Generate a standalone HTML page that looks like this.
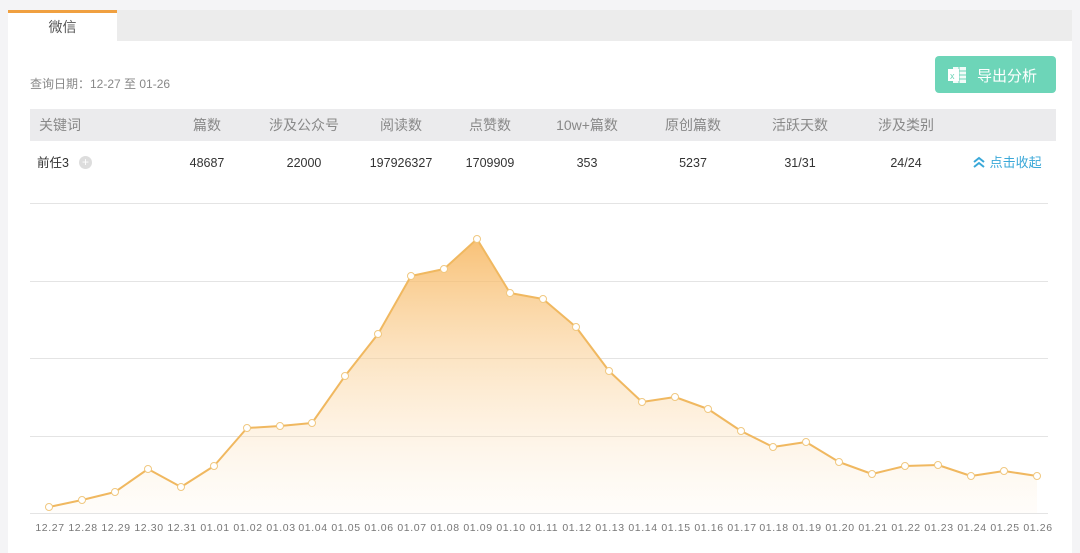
<!DOCTYPE html>
<html><head><meta charset="utf-8"><style>
body{margin:0;width:1080px;height:553px;background:#f4f4f6;font-family:"Liberation Sans","Noto Sans CJK SC",sans-serif;overflow:hidden;position:relative}
.panel{position:absolute;left:8px;top:10px;width:1064px;height:543px;background:#fff}
.tabbar{position:absolute;left:8px;top:10px;width:1064px;height:31px;background:#ececec}
.tab{position:absolute;left:8px;top:10px;width:109px;height:31px;background:#fff;border-top:3px solid #f0a040;box-sizing:border-box;text-align:center;font-size:14px;color:#555;line-height:28px}
.date{position:absolute;left:30px;top:76px;font-size:12px;color:#888;line-height:16px}
.btn{position:absolute;left:935px;top:56px;width:121px;height:37px;background:#6dd5b8;border-radius:4px;color:#fff;font-size:15px}
.btn span{position:absolute;left:42px;top:9px}
.thead{position:absolute;left:30px;top:109px;width:1026px;height:32px;background:#ebebed}
.c{position:absolute;font-size:14px;color:#888;transform:translateX(-50%);white-space:nowrap;line-height:18px}
.r{position:absolute;font-size:12.5px;color:#333;transform:translateX(-50%);white-space:nowrap;line-height:16px}
</style></head><body>
<div class="panel"></div>
<div class="tabbar"></div>
<div class="tab">微信</div>
<div class="date">查询日期：12-27 至 01-26</div>
<div class="btn"><svg style="position:absolute;left:12px;top:9px" width="20" height="20"><rect x="6" y="2" width="13" height="16" fill="#fff" opacity=".9"/><g stroke="#6dd5b8" stroke-width="1"><line x1="12" y1="2" x2="12" y2="18"/><line x1="6" y1="6" x2="19" y2="6"/><line x1="6" y1="10" x2="19" y2="10"/><line x1="6" y1="14" x2="19" y2="14"/></g><rect x="1" y="4" width="11" height="12" fill="#fff"/><text x="3" y="14" font-size="9" fill="#6dd5b8" font-family="Liberation Sans">x</text></svg><span>导出分析</span></div>
<div class="thead"></div>
<div class="c" style="left:60px;top:116px">关键词</div>
<div class="c" style="left:207px;top:116px">篇数</div>
<div class="c" style="left:304px;top:116px">涉及公众号</div>
<div class="c" style="left:401px;top:116px">阅读数</div>
<div class="c" style="left:490px;top:116px">点赞数</div>
<div class="c" style="left:587px;top:116px">10w+篇数</div>
<div class="c" style="left:693px;top:116px">原创篇数</div>
<div class="c" style="left:800px;top:116px">活跃天数</div>
<div class="c" style="left:906px;top:116px">涉及类别</div>
<div class="r" style="left:53px;top:155px">前任3</div>
<div style="position:absolute;left:79px;top:156px;width:13px;height:13px;border-radius:50%;background:#ddd;color:#fff;font-size:12px;line-height:13px;text-align:center">+</div>
<div class="r" style="left:207px;top:155px">48687</div>
<div class="r" style="left:304px;top:155px">22000</div>
<div class="r" style="left:401px;top:155px">197926327</div>
<div class="r" style="left:490px;top:155px">1709909</div>
<div class="r" style="left:587px;top:155px">353</div>
<div class="r" style="left:693px;top:155px">5237</div>
<div class="r" style="left:800px;top:155px">31/31</div>
<div class="r" style="left:906px;top:155px">24/24</div>
<div style="position:absolute;left:972px;top:154px;font-size:13px;color:#3aa8d8;line-height:18px"><svg width="14" height="14" style="vertical-align:-2px"><path d="M2 7l5-4 5 4M2 12l5-4 5 4" stroke="#3aa8d8" stroke-width="2" fill="none"/></svg> 点击收起</div>
<svg style="position:absolute;left:0;top:0" width="1080" height="553">
<defs><linearGradient id="g" x1="0" y1="0" x2="0" y2="1"><stop offset="0" stop-color="#f7b65e" stop-opacity=".85"/><stop offset="1" stop-color="#fde9cc" stop-opacity=".1"/></linearGradient></defs>
<g stroke="#e4e4e4" stroke-width="1"><line x1="30" y1="203.5" x2="1048" y2="203.5"/><line x1="30" y1="281.5" x2="1048" y2="281.5"/><line x1="30" y1="358.5" x2="1048" y2="358.5"/><line x1="30" y1="436.5" x2="1048" y2="436.5"/><line x1="30" y1="513.5" x2="1048" y2="513.5"/></g>
<polygon fill="url(#g)" points="49,513 49,507 82,500 115,492 148,469 181,487 214,466 247,428 280,426 312,423 345,376 378,334 411,276 444,269 477,239 510,293 543,299 576,327 609,371 642,402 675,397 708,409 741,431 773,447 806,442 839,462 872,474 905,466 938,465 971,476 1004,471 1037,476 1037,513"/>
<polyline fill="none" stroke="#f0b860" stroke-width="2" stroke-linejoin="round" points="49,507 82,500 115,492 148,469 181,487 214,466 247,428 280,426 312,423 345,376 378,334 411,276 444,269 477,239 510,293 543,299 576,327 609,371 642,402 675,397 708,409 741,431 773,447 806,442 839,462 872,474 905,466 938,465 971,476 1004,471 1037,476"/>
<g fill="#fff" stroke="#f0c880" stroke-width="1"><circle cx="49" cy="507" r="3.5"/><circle cx="82" cy="500" r="3.5"/><circle cx="115" cy="492" r="3.5"/><circle cx="148" cy="469" r="3.5"/><circle cx="181" cy="487" r="3.5"/><circle cx="214" cy="466" r="3.5"/><circle cx="247" cy="428" r="3.5"/><circle cx="280" cy="426" r="3.5"/><circle cx="312" cy="423" r="3.5"/><circle cx="345" cy="376" r="3.5"/><circle cx="378" cy="334" r="3.5"/><circle cx="411" cy="276" r="3.5"/><circle cx="444" cy="269" r="3.5"/><circle cx="477" cy="239" r="3.5"/><circle cx="510" cy="293" r="3.5"/><circle cx="543" cy="299" r="3.5"/><circle cx="576" cy="327" r="3.5"/><circle cx="609" cy="371" r="3.5"/><circle cx="642" cy="402" r="3.5"/><circle cx="675" cy="397" r="3.5"/><circle cx="708" cy="409" r="3.5"/><circle cx="741" cy="431" r="3.5"/><circle cx="773" cy="447" r="3.5"/><circle cx="806" cy="442" r="3.5"/><circle cx="839" cy="462" r="3.5"/><circle cx="872" cy="474" r="3.5"/><circle cx="905" cy="466" r="3.5"/><circle cx="938" cy="465" r="3.5"/><circle cx="971" cy="476" r="3.5"/><circle cx="1004" cy="471" r="3.5"/><circle cx="1037" cy="476" r="3.5"/></g>
<g font-family="Liberation Sans" font-size="10.5" fill="#777" text-anchor="middle" letter-spacing="0.6"><text x="50" y="531">12.27</text><text x="83" y="531">12.28</text><text x="116" y="531">12.29</text><text x="149" y="531">12.30</text><text x="182" y="531">12.31</text><text x="215" y="531">01.01</text><text x="248" y="531">01.02</text><text x="281" y="531">01.03</text><text x="313" y="531">01.04</text><text x="346" y="531">01.05</text><text x="379" y="531">01.06</text><text x="412" y="531">01.07</text><text x="445" y="531">01.08</text><text x="478" y="531">01.09</text><text x="511" y="531">01.10</text><text x="544" y="531">01.11</text><text x="577" y="531">01.12</text><text x="610" y="531">01.13</text><text x="643" y="531">01.14</text><text x="676" y="531">01.15</text><text x="709" y="531">01.16</text><text x="742" y="531">01.17</text><text x="774" y="531">01.18</text><text x="807" y="531">01.19</text><text x="840" y="531">01.20</text><text x="873" y="531">01.21</text><text x="906" y="531">01.22</text><text x="939" y="531">01.23</text><text x="972" y="531">01.24</text><text x="1005" y="531">01.25</text><text x="1038" y="531">01.26</text></g>
</svg>
</body></html>
